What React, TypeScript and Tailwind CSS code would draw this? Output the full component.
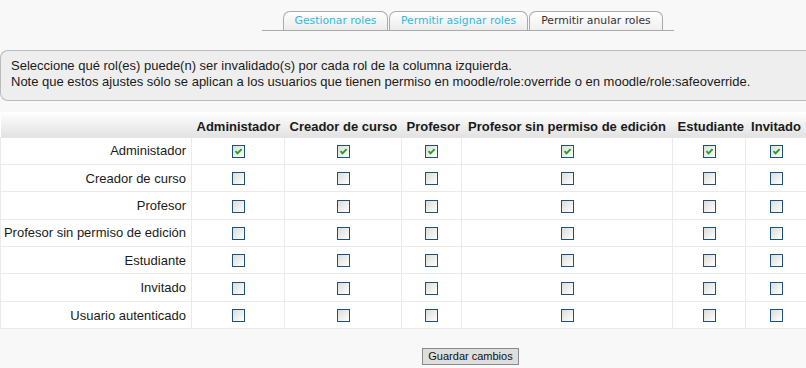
import React from "react";

const cols = [
  { name: "Administador", w: "w-[93px]" },
  { name: "Creador de curso", w: "w-[117px]" },
  { name: "Profesor", w: "w-[60px]" },
  { name: "Profesor sin permiso de edición", w: "w-[211px]" },
  { name: "Estudiante", w: "w-[73px]" },
  { name: "Invitado", w: "w-[61px]" },
];

const rows = [
  "Administador",
  "Creador de curso",
  "Profesor",
  "Profesor sin permiso de edición",
  "Estudiante",
  "Invitado",
  "Usuario autenticado",
];

function Check({ checked }: { checked: boolean }) {
  return (
    <span className="inline-flex w-[13px] h-[13px] border border-[#1c5180] bg-gradient-to-br from-[#dcdcd7] to-white items-center justify-center align-middle">
      {checked && (
        <svg width="11" height="11" viewBox="0 0 11 11">
          <path d="M2.5 5.2 L4.5 7.3 L8.6 3.2" fill="none" stroke="#21a121" strokeWidth="1.9" />
        </svg>
      )}
    </span>
  );
}

export default function App() {
  return (
    <div className="w-[806px] h-[368px] overflow-hidden bg-[#f8f8f8] font-['Liberation_Sans',Arial,sans-serif] text-[13px] text-[#1a1a1a]">
      <div className="pt-[11px]">
        <div className="ml-[262px] w-[412px] h-[20px] border-b border-[#aaa] flex items-end pl-[21px]">
          <div className="w-[105px] h-[19px] rounded-t-[7px] border border-b-0 border-[#aaa] bg-gradient-to-b from-white to-[#ececec] flex items-center justify-center font-['DejaVu_Sans',Verdana,sans-serif] text-[10.8px] text-[#2fbadf]">
            Gestionar roles
          </div>
          <div className="ml-[1px] w-[139px] h-[19px] rounded-t-[7px] border border-b-0 border-[#aaa] bg-gradient-to-b from-white to-[#ececec] flex items-center justify-center font-['DejaVu_Sans',Verdana,sans-serif] text-[10.8px] text-[#2fbadf]">
            Permitir asignar roles
          </div>
          <div className="ml-[1px] w-[134px] h-[19px] rounded-t-[7px] border border-b-0 border-[#aaa] bg-gradient-to-b from-white to-[#f0f0f0] flex items-center justify-center font-['DejaVu_Sans',Verdana,sans-serif] text-[10.8px] text-[#333]">
            Permitir anular roles
          </div>
        </div>
      </div>

      <div className="mt-[19px] w-[830px] h-[51px] border-y border-l border-[#bbb] rounded-l-[8px] bg-[#eee] pl-[10px] pt-[7px] leading-[16px]">
        <div>Seleccione qué rol(es) puede(n) ser invalidado(s) por cada rol de la columna izquierda.</div>
        <div>Note que estos ajustes sólo se aplican a los usuarios que tienen permiso en moodle/role:override o en moodle/role:safeoverride.</div>
      </div>

      <table className="mt-[11px] w-[806px] border-collapse bg-white table-fixed">
        <thead>
          <tr className="h-[25px] bg-gradient-to-b from-white to-[#e2e2e2]">
            <th className="w-[191px] border-b border-[#e6e6e6]"></th>
            {cols.map((c) => (
              <th
                key={c.name}
                className={`${c.w} px-[5px] pb-[3px] align-bottom font-bold text-center whitespace-nowrap border-b border-[#e6e6e6] leading-[15px]`}
              >
                {c.name}
              </th>
            ))}
          </tr>
        </thead>
        <tbody>
          {rows.map((r, i) => (
            <tr key={r} className="h-[27.4px]">
              <td className="border border-[#eaeaea] text-right pr-[5px] whitespace-nowrap leading-[15px]">{r}</td>
              {cols.map((c) => (
                <td key={c.name} className="border border-[#eaeaea] text-center leading-[13px]">
                  <Check checked={i === 0} />
                </td>
              ))}
            </tr>
          ))}
        </tbody>
      </table>

      <div className="mt-[17px] ml-[422px]">
        <button className="w-[97px] h-[17px] border border-[#8a8a8a] bg-[#dedede] text-[11px] leading-[15px] text-[#111] font-['Liberation_Sans',Arial,sans-serif]">
          Guardar cambios
        </button>
      </div>
    </div>
  );
}
